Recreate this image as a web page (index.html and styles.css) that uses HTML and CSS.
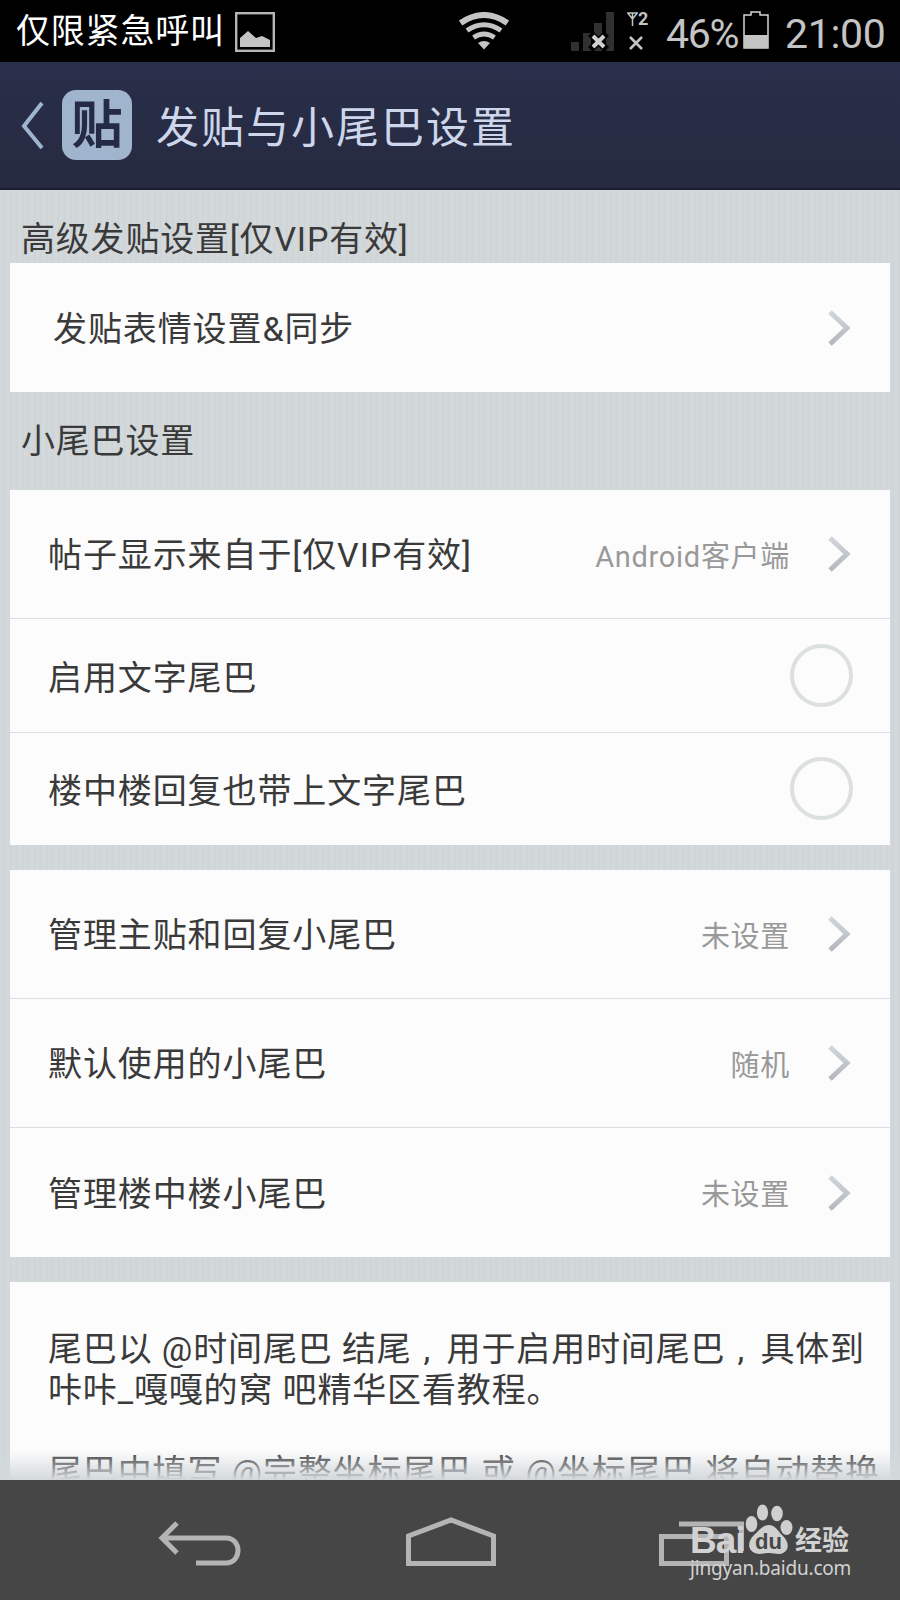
FILE: index.html
```html
<!DOCTYPE html>
<html lang="zh-CN">
<head>
    <meta charset="UTF-8">
    <meta name="viewport" content="width=device-width, initial-scale=1.0">
    <title>发贴与小尾巴设置</title>
    <link rel="stylesheet" href="styles.css">
</head>
<body>

<div class="status-bar">
    <span class="carrier">仅限紧急呼叫</span>
    <svg class="icon-picture" width="40" height="40" viewBox="0 0 40 40">
        <rect x="1.2" y="1.2" width="37.6" height="37.6" fill="none" stroke="#b5b5b5" stroke-width="2.4"/>
        <path d="M5 35V26l8-7 8 7 6-2 8 4v7z" fill="#c4c4c4"/>
    </svg>
    <svg class="icon-wifi" width="50" height="38" viewBox="0 0 50 38">
        <g fill="none" stroke="#c4c4c4">
            <path d="M1.600 11Q25-5 48.400 11" stroke-width="6"/>
            <path d="M8 18.500Q25 7 42 18.500" stroke-width="5"/>
            <path d="M14.500 25.500Q25 18.500 35.500 25.500" stroke-width="4.800"/>
        </g>
        <path d="M19 31q6-4 12 0L25 37.500z" fill="#c4c4c4"/>
    </svg>
    <svg class="icon-signal" width="44" height="40" viewBox="0 0 44 40">
        <path d="M0 30h8v9H0zM12 21h8v18h-8zM23 11h8v28h-8zM35 0h8v39h-8z" fill="#303030"/>
        <path d="M22 24l11 11M33 24L22 35" stroke="#000" stroke-width="7" stroke-linecap="square"/>
        <path d="M22 24l11 11M33 24L22 35" stroke="#d0d0d0" stroke-width="4"/>
    </svg>
    <div class="sim">
        <div class="sim-top">
            <svg width="11" height="14" viewBox="0 0 11 14"><path d="M.8 1h9.400L5.500 7zM5.500 1v13" fill="none" stroke="#c4c4c4" stroke-width="1.500"/></svg>
            <span>2</span>
        </div>
        <svg width="14" height="14" viewBox="0 0 14 14"><path d="M1 1l12 12M13 1L1 13" stroke="#c4c4c4" stroke-width="2.600"/></svg>
    </div>
    <span class="percent">46%</span>
    <svg class="icon-battery" width="26" height="38" viewBox="0 0 26 38">
        <path d="M1 37V4h7V1h9v3h8v33z" fill="none" stroke="#d5d5d5" stroke-width="1.500"/>
        <path d="M1 24h24v13H1z" fill="#c4c4c4"/>
    </svg>
    <span class="clock">21:00</span>
</div>

<div class="header">
    <svg class="back" width="24" height="50" viewBox="0 0 24 50"><path d="M21 2L3 25l18 22" fill="none" stroke="#9fb4cf" stroke-width="4"/></svg>
    <div class="logo">贴</div>
    <h1>发贴与小尾巴设置</h1>
</div>

<div class="content">
    <h2 class="section-title first">高级发贴设置[仅VIP有效]</h2>
    <div class="card">
        <div class="row indent">
            <span class="label">发贴表情设置&amp;同步</span>
            <svg class="arrow" viewBox="0 0 24 38"><path d="M3 3l17 16L3 35"/></svg>
        </div>
    </div>

    <h2 class="section-title">小尾巴设置</h2>
    <div class="card">
        <div class="row">
            <span class="label">帖子显示来自于[仅VIP有效]</span>
            <span class="value">Android客户端</span>
            <svg class="arrow" viewBox="0 0 24 38"><path d="M3 3l17 16L3 35"/></svg>
        </div>
        <div class="row short">
            <span class="label">启用文字尾巴</span>
            <span class="circle"></span>
        </div>
        <div class="row short">
            <span class="label">楼中楼回复也带上文字尾巴</span>
            <span class="circle"></span>
        </div>
    </div>

    <div class="card gap">
        <div class="row">
            <span class="label">管理主贴和回复小尾巴</span>
            <span class="value">未设置</span>
            <svg class="arrow" viewBox="0 0 24 38"><path d="M3 3l17 16L3 35"/></svg>
        </div>
        <div class="row">
            <span class="label">默认使用的小尾巴</span>
            <span class="value">随机</span>
            <svg class="arrow" viewBox="0 0 24 38"><path d="M3 3l17 16L3 35"/></svg>
        </div>
        <div class="row">
            <span class="label">管理楼中楼小尾巴</span>
            <span class="value">未设置</span>
            <svg class="arrow" viewBox="0 0 24 38"><path d="M3 3l17 16L3 35"/></svg>
        </div>
    </div>

    <div class="card gap tips">
        <p>尾巴以 @时间尾巴 结尾<span class="comma">,</span>用于启用时间尾巴<span class="comma">,</span>具体到<br>咔咔_嘎嘎的窝 吧精华区看教程。</p>
        <p>尾巴中填写 @完整坐标尾巴 或 @坐标尾巴 将自动替换</p>
    </div>
    <div class="fade"></div>
</div>

<div class="nav-bar">
    <svg width="84" height="46" viewBox="0 0 84 46"><path d="M19 2L4 17l15 15M5 17h63c16 0 16 25 0 25H38"/></svg>
    <svg width="90" height="50" viewBox="0 0 90 50"><path d="M2.500 46.500V19L45 3l42.500 16v27.500z"/></svg>
    <svg width="90" height="46" viewBox="0 0 90 46"><path d="M2.500 15.500h65v27h-65zM20 3h62.500v27"/></svg>

    <div class="watermark">
        <div class="brand">
            <span class="bai">Bai</span>
            <svg width="48" height="52" viewBox="0 0 48 52">
                <g fill="#cfcfcf">
                    <ellipse cx="6.500" cy="20" rx="5.800" ry="8"/>
                    <ellipse cx="17.500" cy="8.500" rx="5.600" ry="8"/>
                    <ellipse cx="32" cy="9.500" rx="5.800" ry="7.800"/>
                    <ellipse cx="41.500" cy="23.500" rx="6" ry="7.500"/>
                    <path d="M24 21c6 0 9 6 13 10 9 8 7 18-3 19-4 0-6-1-10-1s-6 1-10 1C3 49 1 39 9 31c5-4 8-10 15-10z"/>
                </g>
                <text class="du" x="10" y="45" textLength="27" lengthAdjust="spacingAndGlyphs">du</text>
            </svg>
            <span class="jingyan">经验</span>
        </div>
        <div class="url">jingyan.baidu.com</div>
    </div>
</div>

<svg class="defs" width="0" height="0">
    <linearGradient id="arrow-fill" x1="0" y1="0" x2="0" y2="1">
        <stop offset="0" stop-color="#d0d5dc"/>
        <stop offset="1" stop-color="#b4b8be"/>
    </linearGradient>
</svg>

</body>
</html>
```
FILE: styles.css
```css
body {
    margin: 0;
    width: 900px;
    height: 1600px;
    overflow: hidden;
    display: flex;
    flex-direction: column;
    font-family: Roboto, "Noto Sans CJK SC", sans-serif;
    color: #3a3a3a;
}

h1, h2, p {
    margin: 0;
    font-weight: normal;
}

svg {
    display: block;
    flex-shrink: 0;
}

/* status bar */
.status-bar {
    height: 62px;
    background-color: #000;
    color: #c4c4c4;
    display: flex;
    align-items: flex-start;
    white-space: nowrap;
}

.carrier {
    margin-left: 16px;
    width: 219px;
    line-height: 63px;
    font-size: 34px;
    letter-spacing: 0.8px;
    color: #fff;
}

.icon-picture {
    margin-top: 12px;
}

.icon-wifi {
    margin: 12px 0 0 184px;
}

.icon-signal {
    margin: 12px 0 0 62px;
}

.sim {
    margin: 12px 0 0 12px;
    width: 24px;
}

.sim-top {
    display: flex;
    height: 24px;
    font-size: 18px;
    font-weight: bold;
    line-height: 14px;
}

.sim > svg {
    margin-left: 2px;
}

.percent {
    margin-left: 15px;
    width: 77px;
    font-size: 41px;
    line-height: 68px;
    letter-spacing: -1.3px;
}

.icon-battery {
    margin-top: 11px;
}

.clock {
    margin-left: 16px;
    font-size: 41px;
    line-height: 68px;
    letter-spacing: -0.3px;
}

/* title bar */
.header {
    height: 128px;
    box-sizing: border-box;
    background: linear-gradient(#292e4a, #262b40);
    border-top: 1px solid #2d3246;
    border-bottom: 2px solid #1a1d30;
    display: flex;
    align-items: center;
}

.back {
    margin-left: 21px;
}

.logo {
    width: 70px;
    height: 70px;
    margin: 0 0 2px 17px;
    border-radius: 14px;
    background-color: #a0b4cd;
    color: #262b45;
    font-size: 51px;
    font-weight: bold;
    line-height: 72px;
    text-align: center;
}

.header h1 {
    margin: 0 0 4px 24px;
    font-size: 43px;
    letter-spacing: 2px;
    color: #cdd6ea;
}

/* settings list */
.content {
    position: relative;
    height: 1290px;
    overflow: hidden;
    background: repeating-linear-gradient(90deg, #d3d8db 0, #d3d8db 3px, #ced3d6 5px, #d3d8db 6px);
}

.section-title {
    height: 98px;
    line-height: 99px;
    padding-left: 21px;
    font-size: 34px;
    letter-spacing: 0.8px;
}

.section-title.first {
    height: 48px;
    line-height: 49px;
    padding-top: 25px;
}

.card {
    margin: 0 10px;
    background-color: #fcfcfc;
}

.card.gap {
    margin-top: 25px;
}

.row {
    height: 129px;
    box-sizing: border-box;
    border-bottom: 1px solid #dcdedf;
    padding: 0 37px 0 38px;
    display: flex;
    align-items: center;
}

.row:last-child {
    border-bottom: none;
}

.row.indent {
    padding-left: 43px;
}

.row.short {
    height: 114px;
}

.row.short:last-child {
    height: 112px;
    padding-bottom: 2px;
}

.label {
    flex: 1;
    font-size: 34px;
    letter-spacing: 0.9px;
    padding-bottom: 3px;
}

.row.short .label {
    padding-bottom: 0;
}

.value {
    font-size: 29px;
    letter-spacing: 0.7px;
    color: #999;
    margin-right: 37px;
    padding-bottom: 1px;
}

.arrow {
    width: 24px;
    height: 38px;
    margin-right: 2px;
    fill: none;
    stroke: url(#arrow-fill);
    stroke-width: 5;
}

.circle {
    width: 63px;
    height: 63px;
    box-sizing: border-box;
    border: 4px solid #dde0e0;
    border-radius: 50%;
}

.tips {
    height: 300px;
    padding: 47px 0 0 38px;
    font-size: 34px;
    letter-spacing: 0.85px;
    line-height: 41px;
    white-space: nowrap;
}

.tips p + p {
    margin-top: 41px;
}

.comma {
    display: inline-block;
    width: 35px;
    text-indent: 12px;
}

.fade {
    position: absolute;
    left: 0;
    right: 0;
    bottom: 0;
    height: 30px;
    background: linear-gradient(rgba(212, 217, 220, 0), #d4d9dc);
}

/* navigation bar */
.nav-bar {
    position: relative;
    height: 120px;
    box-sizing: border-box;
    background-color: #464646;
    display: flex;
    justify-content: space-between;
    align-items: flex-end;
    padding: 0 151px 33px 158px;
}

.nav-bar > svg {
    fill: none;
    stroke: #b4b4b4;
    stroke-width: 5;
}

.watermark {
    position: absolute;
    left: 690px;
    top: 24px;
    color: #d2d2d2;
}

.brand {
    display: flex;
    height: 52px;
}

.bai {
    width: 55px;
    font: bold 37px/64px "Liberation Sans", sans-serif;
    letter-spacing: -1px;
    padding-top: 5px;
}

.du {
    font: bold 22px "Liberation Sans", sans-serif;
    fill: #464646;
}

.jingyan {
    margin-left: 2px;
    font-size: 27px;
    font-weight: bold;
    line-height: 74px;
}

.url {
    font: 19px/25px "Noto Sans", sans-serif;
    letter-spacing: -0.2px;
}

.defs {
    position: absolute;
}
```
